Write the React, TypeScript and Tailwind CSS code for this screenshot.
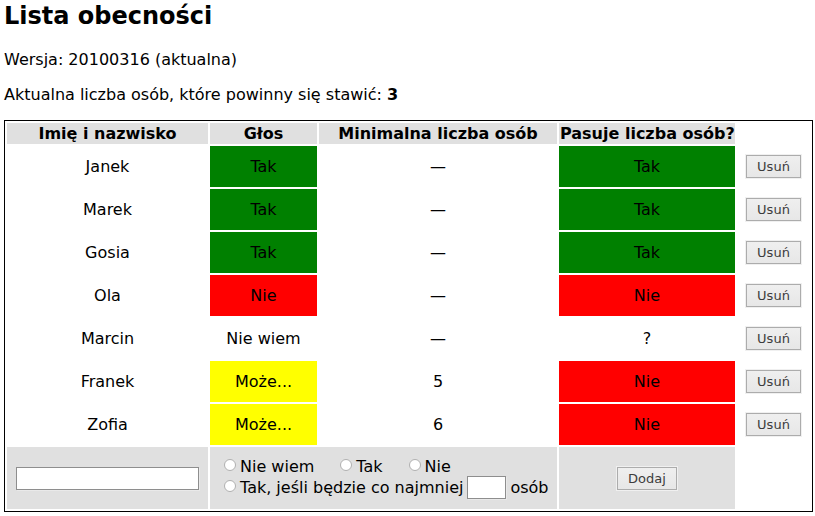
import React from "react";

type Vote = "Tak" | "Nie" | "Nie wiem" | "Może...";

interface Person {
  name: string;
  vote: Vote;
  minimum: string;
  fits: "Tak" | "Nie" | "?";
}

const people: Person[] = [
  { name: "Janek", vote: "Tak", minimum: "—", fits: "Tak" },
  { name: "Marek", vote: "Tak", minimum: "—", fits: "Tak" },
  { name: "Gosia", vote: "Tak", minimum: "—", fits: "Tak" },
  { name: "Ola", vote: "Nie", minimum: "—", fits: "Nie" },
  { name: "Marcin", vote: "Nie wiem", minimum: "—", fits: "?" },
  { name: "Franek", vote: "Może...", minimum: "5", fits: "Nie" },
  { name: "Zofia", vote: "Może...", minimum: "6", fits: "Nie" },
];

const cellColors: Record<string, string> = {
  Tak: "bg-[#008000]",
  Nie: "bg-[#ff0000]",
  "Może...": "bg-[#ffff00]",
  "Nie wiem": "",
  "?": "",
};

const fieldClass =
  "block h-[23px] border border-[#8e8e8e] bg-white px-1 text-[13px] outline-none shadow-[1px_1px_0_#e9e9e9]";

function Button({ children, submit }: { children: string; submit?: boolean }) {
  return (
    <button
      type={submit ? "submit" : "button"}
      form={submit ? "vote-form" : undefined}
      className="block h-[23px] mx-auto border border-[#acacac] bg-linear-to-b from-[#efefef] to-[#e7e7e7] px-[10px] text-[13px] leading-[21px] text-[#3c3c3c] shadow-[0_0_0_1px_#f0f0f0]"
    >
      {children}
    </button>
  );
}

function Option({ children, value }: { children: React.ReactNode; value: string }) {
  return (
    <label className="flex items-center gap-1">
      <input
        type="radio"
        name="vote"
        value={value}
        form="vote-form"
        className="-mt-1 size-3 shrink-0 appearance-none rounded-full border border-[#b0b0b0] bg-white checked:border-4 checked:border-[#555]"
      />
      {children}
    </label>
  );
}

export default function App() {
  return (
    <main className="bg-white pr-[2px] pl-1 font-['DejaVu_Sans',sans-serif] text-[16px] leading-[19px] text-black">
      <h1 className="pt-[2px] text-[24px] leading-[28px] font-bold">Lista obecności</h1>
      <p className="mt-5">Wersja: 20100316 (aktualna)</p>
      <p className="mt-4">
        Aktualna liczba osób, które powinny się stawić: <b>3</b>
      </p>
      <form id="vote-form" onSubmit={(event) => event.preventDefault()} />
      <table className="mt-4 w-full table-fixed border-separate border-spacing-[2px] border border-black text-center">
        <colgroup>
          <col className="w-[201px]" />
          <col className="w-[107px]" />
          <col />
          <col className="w-[176px]" />
          <col className="w-[73px]" />
        </colgroup>
        <thead>
          <tr className="h-[21px] whitespace-nowrap">
            <th className="bg-[#e0e0e0] p-px">Imię i nazwisko</th>
            <th className="bg-[#e0e0e0] p-px">Głos</th>
            <th className="bg-[#e0e0e0] p-px">Minimalna liczba osób</th>
            <th className="bg-[#e0e0e0] p-px">Pasuje liczba osób?</th>
            <td />
          </tr>
        </thead>
        <tbody>
          {people.map((person) => (
            <tr key={person.name} className="h-[41px]">
              <td>{person.name}</td>
              <td className={cellColors[person.vote]}>{person.vote}</td>
              <td>{person.minimum}</td>
              <td className={cellColors[person.fits]}>{person.fits}</td>
              <td>
                <Button>Usuń</Button>
              </td>
            </tr>
          ))}
        </tbody>
        <tfoot>
          <tr className="h-[62px]">
            <td className="bg-[#e0e0e0] px-[9px]">
              <input type="text" form="vote-form" aria-label="Imię i nazwisko" className={`${fieldClass} w-full`} />
            </td>
            <td colSpan={2} className="bg-[#e0e0e0] px-[14px] text-left whitespace-nowrap">
              <div className="flex gap-[26px]">
                <Option value="unknown">Nie wiem</Option>
                <Option value="yes">Tak</Option>
                <Option value="no">Nie</Option>
              </div>
              <div className="flex h-[23px] items-center gap-1">
                <Option value="maybe">Tak, jeśli będzie co najmniej</Option>
                <input
                  type="text"
                  form="vote-form"
                  aria-label="Minimalna liczba osób"
                  className={`${fieldClass} w-[39px]`}
                />
                <span>osób</span>
              </div>
            </td>
            <td className="bg-[#e0e0e0]">
              <Button submit>Dodaj</Button>
            </td>
            <td />
          </tr>
        </tfoot>
      </table>
    </main>
  );
}
